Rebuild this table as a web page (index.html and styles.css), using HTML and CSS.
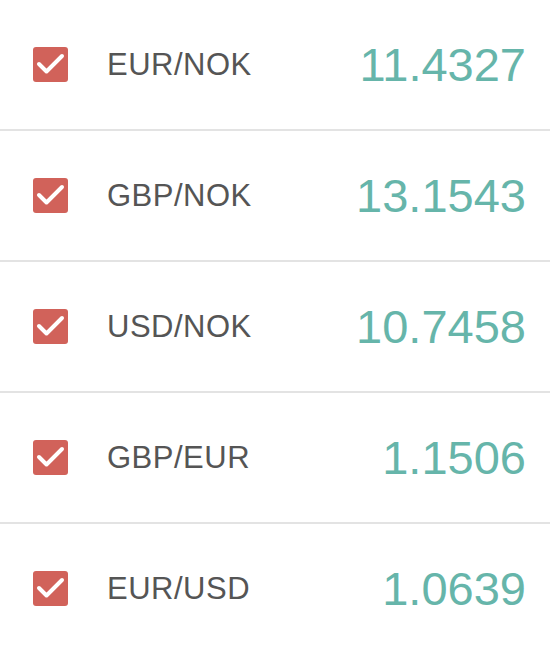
FILE: index.html
```html
<!DOCTYPE html>
<html>
<head>
<meta charset="utf-8">
<link rel="stylesheet" href="styles.css">
</head>
<body>
<ul class="rates">
  <li class="rate">
    <span class="check"><svg viewBox="0 0 35 35" width="35" height="35"><path d="M6 17 L13.5 24.5 L29 9" /></svg></span>
    <span class="pair">EUR/NOK</span>
    <span class="value">11.4327</span>
  </li>
  <li class="rate">
    <span class="check"><svg viewBox="0 0 35 35" width="35" height="35"><path d="M6 17 L13.5 24.5 L29 9" /></svg></span>
    <span class="pair">GBP/NOK</span>
    <span class="value">13.1543</span>
  </li>
  <li class="rate">
    <span class="check"><svg viewBox="0 0 35 35" width="35" height="35"><path d="M6 17 L13.5 24.5 L29 9" /></svg></span>
    <span class="pair">USD/NOK</span>
    <span class="value">10.7458</span>
  </li>
  <li class="rate">
    <span class="check"><svg viewBox="0 0 35 35" width="35" height="35"><path d="M6 17 L13.5 24.5 L29 9" /></svg></span>
    <span class="pair">GBP/EUR</span>
    <span class="value">1.1506</span>
  </li>
  <li class="rate">
    <span class="check"><svg viewBox="0 0 35 35" width="35" height="35"><path d="M6 17 L13.5 24.5 L29 9" /></svg></span>
    <span class="pair">EUR/USD</span>
    <span class="value">1.0639</span>
  </li>
</ul>
</body>
</html>
```
FILE: styles.css
```css
html, body {
  margin: 0;
  padding: 0;
  background: #ffffff;
}
body {
  font-family: "Liberation Sans", Arial, sans-serif;
  overflow: hidden;
}
.rates {
  list-style: none;
  margin: 0;
  padding: 0;
}
.rate {
  display: flex;
  align-items: center;
  height: 129px;
  padding: 0 24px 0 33px;
  border-bottom: 2px solid #e3e3e3;
}
.check {
  display: flex;
  width: 35px;
  height: 35px;
  border-radius: 3px;
  background: #d1625a;
  flex: none;
}
.check svg {
  display: block;
}
.check path {
  fill: none;
  stroke: #ffffff;
  stroke-width: 4;
  stroke-linecap: round;
  stroke-linejoin: round;
}
.pair {
  margin-left: 39px;
  font-size: 31px;
  letter-spacing: 0.5px;
  color: #555555;
  line-height: 1;
}
.value {
  margin-left: auto;
  font-size: 47px;
  color: #66b5aa;
  line-height: 1;
}
```
